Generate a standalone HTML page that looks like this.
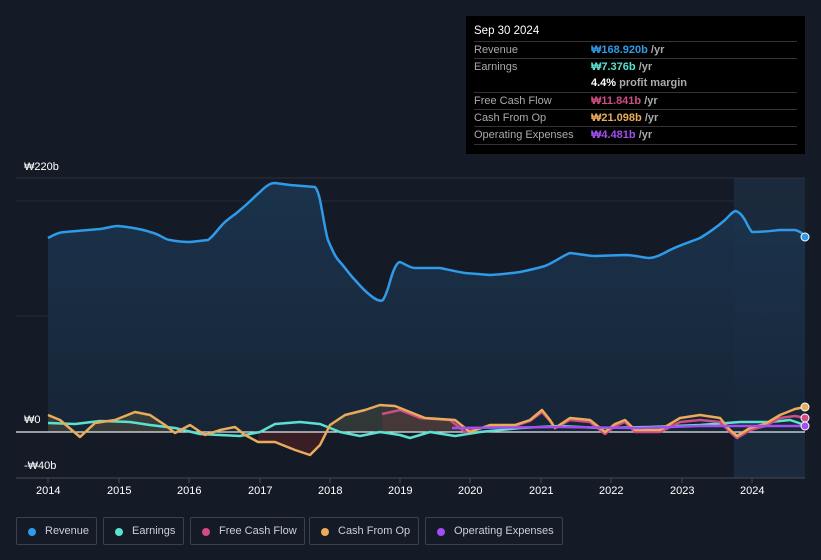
<!DOCTYPE html><html><head><style>
body{margin:0;background:#151b26;width:821px;height:560px;overflow:hidden;font-family:"Liberation Sans",sans-serif;position:relative}
.tt{position:absolute;left:466px;top:16px;width:339px;height:138px;background:#000;color:#fff;font-size:11px}
.tt .h{position:absolute;left:8px;top:9px;font-size:11.5px}
.r{position:absolute;left:8px;width:323px;border-top:1px solid #333;height:17px;line-height:17px;color:#aaa}
.r b{position:absolute;left:117px;font-weight:bold}
.r span{color:#aaa}
.lg{position:absolute;top:517px;height:28px;border:1px solid #3a404c;border-radius:2px;color:#ccd;font-size:11px;line-height:26px;box-sizing:border-box;padding-left:28px;white-space:nowrap}
.lg i{position:absolute;left:11px;top:10px;width:8px;height:8px;border-radius:50%}
.ax{position:absolute;color:#fff;font-size:11px}
</style></head><body>
<svg width="821" height="560" style="position:absolute;left:0;top:0">
<defs><linearGradient id="g" x1="0" y1="0" x2="0" y2="1"><stop offset="0" stop-color="#1b3550"/><stop offset="1" stop-color="#172638"/></linearGradient></defs>
<rect x="16" y="178" width="789" height="300" fill="#151b26"/>
<rect x="734" y="178" width="71" height="300" fill="#1a2a3c"/>
<line x1="16" y1="178" x2="805" y2="178" stroke="#2a303c"/>
<line x1="16" y1="201" x2="805" y2="201" stroke="#222a36"/>
<line x1="16" y1="316" x2="805" y2="316" stroke="#222a36"/>
<path d="M48,238 C55,234 60,232 65,232 L100,229 C108,228 112,226 118,226 C130,227 145,230 150,232 C160,234 165,240 170,240 C180,242 185,242 190,242 L208,240 C215,235 220,226 225,222 C232,216 236,214 240,210 C250,202 255,196 260,192 C266,186 270,183 275,183 L290,185 L315,187 C318,190 320,200 320,200 C324,220 326,235 328,240 C333,252 336,258 340,262 C347,270 350,275 355,280 C362,288 366,292 370,295 C376,300 380,302 383,300 C388,292 390,280 392,275 C395,266 398,262 400,262 C405,264 410,268 415,268 L440,268 C450,270 458,272 465,273 L490,275 C505,274 512,273 520,272 C530,270 538,268 545,266 C555,262 562,256 570,253 C580,254 588,256 595,256 L625,255 C635,255 643,258 650,258 C658,257 664,253 670,250 C680,245 690,242 700,238 C710,232 718,226 725,220 C730,215 733,211 736,211 C741,213 743,217 745,220 C748,226 750,230 752,232 C762,232 770,231 780,230 L795,230 C800,231 803,234 805,237 L805,432 L48,432Z" fill="url(#g)" opacity="0.9"/>
<path d="M382,414 L400,410 L420,418 L450,420 L465,430 L382,432Z" fill="#5a2a3a" opacity="0.6"/>
<path d="M258,432 L258,442 L275,442 L295,450 L310,455 L320,445 L328,432Z" fill="#4a2026" opacity="0.7"/>
<path d="M48,415 L60,420 L80,437 L95,423 L115,420 L135,412 L150,415 L165,425 L175,432 L48,432Z" fill="#4a4a3a" opacity="0.6"/>
<path d="M330,425 L345,415 L365,410 L380,405 L395,406 L410,412 L425,418 L455,420 L465,432 L330,432Z" fill="#4a4a3a" opacity="0.5"/>
<line x1="16" y1="432" x2="805" y2="432" stroke="#e8e8e8" stroke-width="1.2"/>
<line x1="16" y1="478" x2="805" y2="478" stroke="#444a55"/>
<g stroke="#444a55"><line x1="48" y1="478" x2="48" y2="483"/><line x1="119" y1="478" x2="119" y2="483"/><line x1="189" y1="478" x2="189" y2="483"/><line x1="260" y1="478" x2="260" y2="483"/><line x1="330" y1="478" x2="330" y2="483"/><line x1="400" y1="478" x2="400" y2="483"/><line x1="470" y1="478" x2="470" y2="483"/><line x1="541" y1="478" x2="541" y2="483"/><line x1="611" y1="478" x2="611" y2="483"/><line x1="682" y1="478" x2="682" y2="483"/><line x1="752" y1="478" x2="752" y2="483"/></g>
<g fill="none" stroke-width="2.5" stroke-linejoin="round">
<path stroke="#5ce0cf" d="M48,423 L75,424 L100,421 L130,422 L150,425 L175,428 L200,434 L240,436 L260,432 L275,424 L300,422 L320,424 L340,432 L360,436 L380,432 L400,435 L410,438 L430,432 L455,436 L480,432 L520,428 L560,426 L600,428 L650,427 L700,425 L740,422 L770,422 L790,420 L805,425"/>
<path stroke="#d04c85" d="M382,414 L400,410 L420,418 L450,420 L465,432 L490,426 L515,426 L530,421 L542,412 L550,421 L555,428 L570,420 L590,422 L605,434 L615,426 L625,422 L635,432 L660,432 L680,422 L700,420 L720,422 L730,432 L737,438 L750,430 L765,426 L780,418 L795,416 L805,418"/>
<path stroke="#e9ac5b" d="M48,415 L60,420 L80,437 L95,423 L115,420 L135,412 L150,415 L165,425 L175,433 L190,425 L205,435 L220,430 L235,427 L245,435 L258,442 L275,442 L295,450 L310,455 L320,445 L330,425 L345,415 L365,410 L380,405 L395,406 L410,412 L425,418 L455,420 L470,432 L490,425 L515,425 L530,420 L542,410 L550,420 L555,428 L570,418 L590,420 L605,432 L615,424 L625,420 L635,430 L660,430 L680,418 L700,415 L720,418 L730,430 L737,436 L750,428 L765,424 L780,415 L795,409 L805,407"/>
<path stroke="#a24ef0" d="M452,428 L560,427 L640,428 L700,426 L760,426 L805,426"/>
<path stroke="#2f9ae8" d="M48,238 C55,234 60,232 65,232 L100,229 C108,228 112,226 118,226 C130,227 145,230 150,232 C160,234 165,240 170,240 C180,242 185,242 190,242 L208,240 C215,235 220,226 225,222 C232,216 236,214 240,210 C250,202 255,196 260,192 C266,186 270,183 275,183 L290,185 L315,187 C318,190 320,200 320,200 C324,220 326,235 328,240 C333,252 336,258 340,262 C347,270 350,275 355,280 C362,288 366,292 370,295 C376,300 380,302 383,300 C388,292 390,280 392,275 C395,266 398,262 400,262 C405,264 410,268 415,268 L440,268 C450,270 458,272 465,273 L490,275 C505,274 512,273 520,272 C530,270 538,268 545,266 C555,262 562,256 570,253 C580,254 588,256 595,256 L625,255 C635,255 643,258 650,258 C658,257 664,253 670,250 C680,245 690,242 700,238 C710,232 718,226 725,220 C730,215 733,211 736,211 C741,213 743,217 745,220 C748,226 750,230 752,232 C762,232 770,231 780,230 L795,230 C800,231 803,234 805,237"/>
</g>
<circle cx="805" cy="237" r="4" fill="#2f9ae8" stroke="#fff" stroke-width="1"/>
<circle cx="805" cy="407" r="4" fill="#e9ac5b" stroke="#fff" stroke-width="1"/>
<circle cx="805" cy="418" r="4" fill="#d04c85" stroke="#fff" stroke-width="1"/>
<circle cx="805" cy="426" r="4" fill="#a24ef0" stroke="#fff" stroke-width="1"/>
</svg>
<div class="ax" style="left:24px;top:161px">₩220b</div>
<div class="ax" style="left:24px;top:414px">₩0</div>
<div class="ax" style="left:24px;top:460px">-₩40b</div>
<div class="ax" style="left:36px;top:485px">2014</div><div class="ax" style="left:107px;top:485px">2015</div><div class="ax" style="left:177px;top:485px">2016</div><div class="ax" style="left:248px;top:485px">2017</div><div class="ax" style="left:318px;top:485px">2018</div><div class="ax" style="left:388px;top:485px">2019</div><div class="ax" style="left:458px;top:485px">2020</div><div class="ax" style="left:529px;top:485px">2021</div><div class="ax" style="left:599px;top:485px">2022</div><div class="ax" style="left:670px;top:485px">2023</div><div class="ax" style="left:740px;top:485px">2024</div>
<div class="tt"><div class="h">Sep 30 2024</div>
<div class="r" style="top:25px">Revenue<b style="color:#2f9ae8">₩168.920b <span>/yr</span></b></div>
<div class="r" style="top:42px">Earnings<b style="color:#5ce0cf">₩7.376b <span>/yr</span></b></div>
<div class="r" style="top:59px;border-top:none"><b style="color:#fff">4.4% <span>profit margin</span></b></div>
<div class="r" style="top:76px">Free Cash Flow<b style="color:#d04c85">₩11.841b <span>/yr</span></b></div>
<div class="r" style="top:93px">Cash From Op<b style="color:#e9ac5b">₩21.098b <span>/yr</span></b></div>
<div class="r" style="top:110px">Operating Expenses<b style="color:#a24ef0">₩4.481b <span>/yr</span></b></div>
<div class="r" style="top:128px;height:0"></div>
</div>
<div class="lg" style="left:16px;width:81px"><i style="background:#2f9ae8"></i>Revenue</div>
<div class="lg" style="left:103px;width:81px"><i style="background:#5ce0cf"></i>Earnings</div>
<div class="lg" style="left:190px;width:115px"><i style="background:#d04c85"></i>Free Cash Flow</div>
<div class="lg" style="left:309px;width:110px"><i style="background:#e9ac5b"></i>Cash From Op</div>
<div class="lg" style="left:425px;width:138px"><i style="background:#a24ef0"></i>Operating Expenses</div>
</body></html>
